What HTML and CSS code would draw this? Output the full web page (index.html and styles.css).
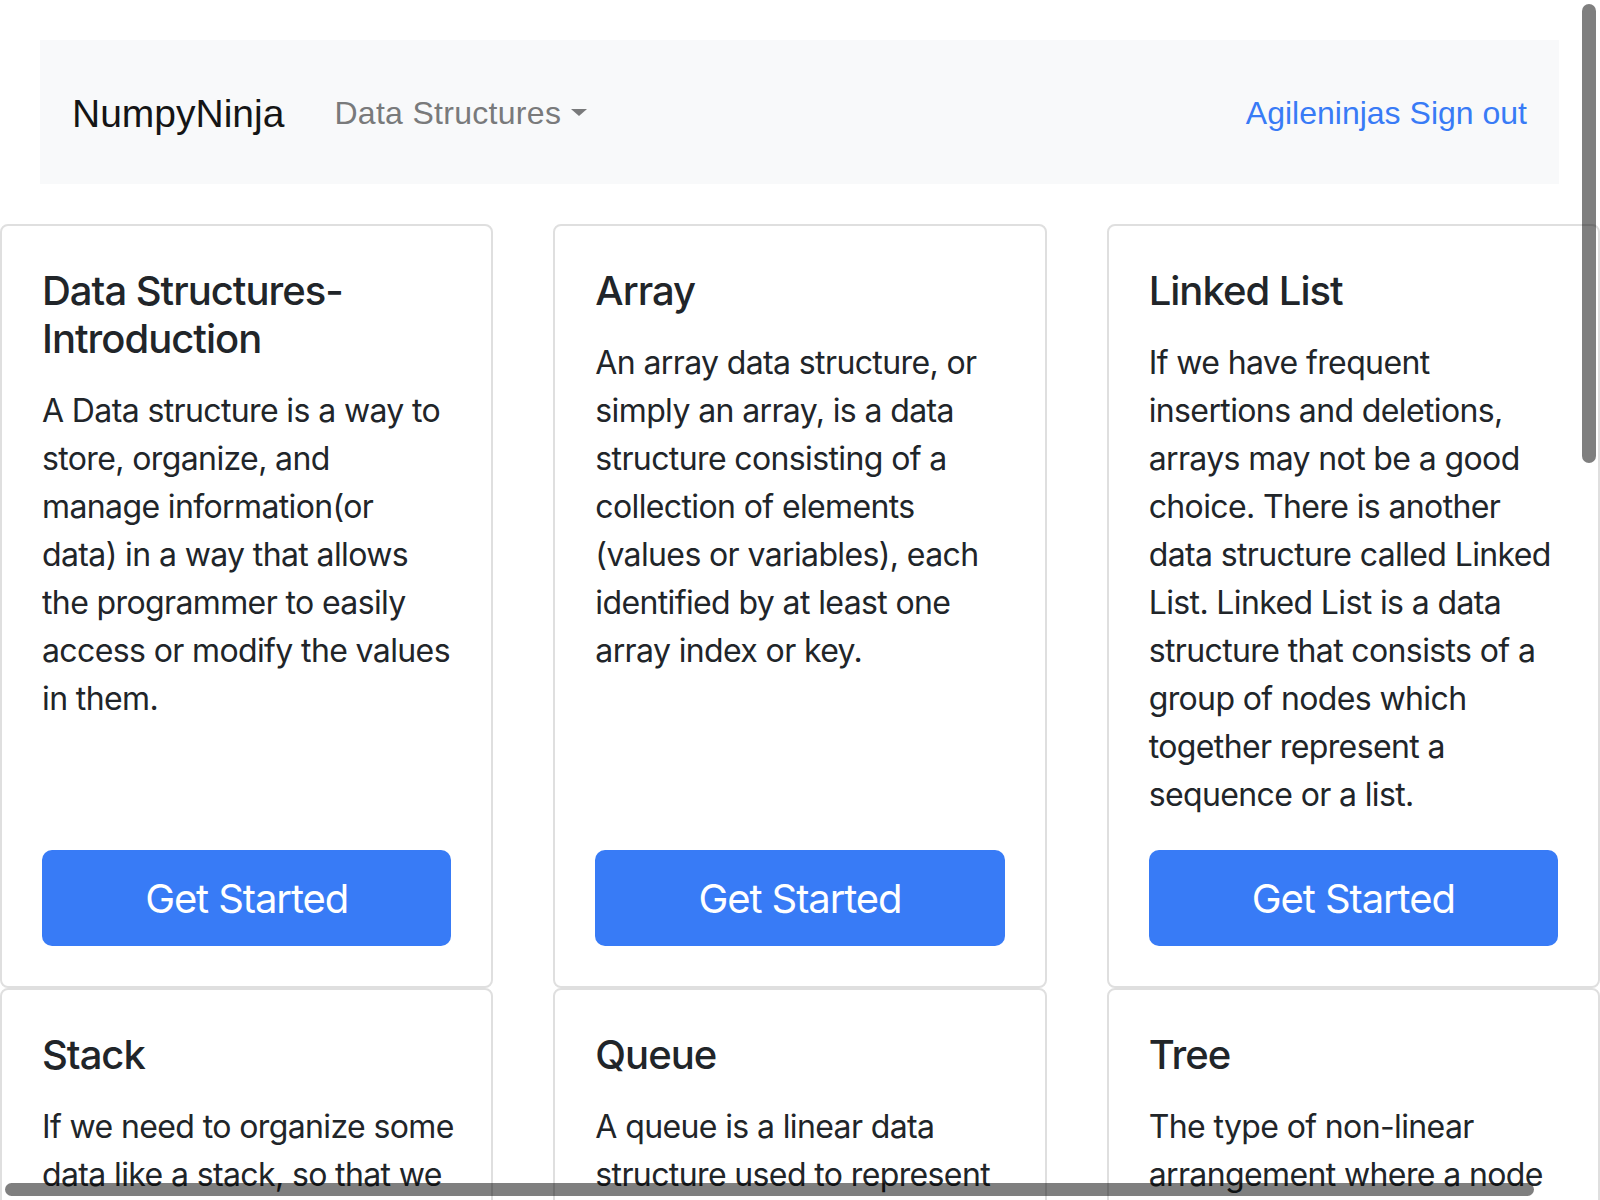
FILE: index.html
```html
<!DOCTYPE html>
<html lang="en">
<head>
<meta charset="utf-8">
<title>NumpyNinja</title>
<link rel="stylesheet" href="styles.css">
</head>
<body>
<div class="page">
  <nav class="navbar">
    <div class="nav-left">
      <a class="brand" href="#">NumpyNinja</a>
      <a class="nav-link dropdown-toggle" href="#">Data Structures<span class="caret"></span></a>
    </div>
    <div class="nav-right">
      <a class="user-link" href="#">Agileninjas</a>
      <a class="user-link" href="#">Sign out</a>
    </div>
  </nav>

  <div class="cards">
    <div class="card">
      <h5 class="card-title">Data Structures-<br>Introduction</h5>
      <p class="card-text">A Data structure is a way to<br>store, organize, and<br>manage information(or<br>data) in a way that allows<br>the programmer to easily<br>access or modify the values<br>in them.</p>
      <a class="btn" href="#">Get Started</a>
    </div>
    <div class="card">
      <h5 class="card-title">Array</h5>
      <p class="card-text">An array data structure, or<br>simply an array, is a data<br>structure consisting of a<br>collection of elements<br>(values or variables), each<br>identified by at least one<br>array index or key.</p>
      <a class="btn" href="#">Get Started</a>
    </div>
    <div class="card">
      <h5 class="card-title">Linked List</h5>
      <p class="card-text">If we have frequent<br>insertions and deletions,<br>arrays may not be a good<br>choice. There is another<br>data structure called Linked<br>List. Linked List is a data<br>structure that consists of a<br>group of nodes which<br>together represent a<br>sequence or a list.</p>
      <a class="btn" href="#">Get Started</a>
    </div>
    <div class="card">
      <h5 class="card-title">Stack</h5>
      <p class="card-text">If we need to organize some<br>data like a stack, so that we<br>can only access the most<br>recently added element.</p>
      <a class="btn" href="#">Get Started</a>
    </div>
    <div class="card">
      <h5 class="card-title">Queue</h5>
      <p class="card-text">A queue is a linear data<br>structure used to represent<br>a linear list of elements.</p>
      <a class="btn" href="#">Get Started</a>
    </div>
    <div class="card">
      <h5 class="card-title">Tree</h5>
      <p class="card-text">The type of non-linear<br>arrangement where a node<br>is connected to others.</p>
      <a class="btn" href="#">Get Started</a>
    </div>
  </div>
</div>
<div class="scrollbar-v"></div>
<div class="scrollbar-h"></div>
</body>
</html>
```

FILE: styles.css
```css
html, body {
  margin: 0;
  padding: 0;
  width: 1600px;
  height: 1200px;
  overflow: hidden;
  background: #ffffff;
}

body {
  font-family: Inter, "Liberation Sans", Arial, sans-serif;
  color: #212529;
}

a {
  text-decoration: none;
}

.page {
  padding-top: 40px;
}

.navbar {
  margin: 0 41px 0 40px;
  height: 144px;
  box-sizing: border-box;
  padding: 0 32px;
  background: #f8f9fa;
  display: flex;
  align-items: center;
  justify-content: space-between;
  font-family: "Liberation Sans", Arial, sans-serif;
}

.nav-left {
  display: flex;
  align-items: center;
}

.brand {
  font-size: 39px;
  line-height: 60px;
  color: #151515;
  margin-right: 34px;
  padding-top: 3px;
}

.nav-link {
  font-size: 32px;
  line-height: 48px;
  letter-spacing: 0.3px;
  color: #797a7b;
  padding: 2px 16px 0;
  display: flex;
  align-items: center;
}

.caret {
  display: inline-block;
  margin-left: 10px;
  margin-top: -2px;
  width: 0;
  height: 0;
  border-top: 7px solid #797a7b;
  border-left: 8px solid transparent;
  border-right: 8px solid transparent;
}

.nav-right {
  display: flex;
  gap: 9px;
  padding-top: 2px;
}

.user-link {
  font-size: 32px;
  line-height: 48px;
  color: #387bf6;
}

.cards {
  margin-top: 40px;
  display: grid;
  grid-template-columns: repeat(3, 493.33px);
  column-gap: 60px;
}

.card {
  border: 2px solid #dfdfdf;
  border-radius: 8px;
  padding: 41px 40px 40px;
  display: flex;
  flex-direction: column;
  background: #fff;
}

.card-title {
  margin: 0 0 24px;
  font-size: 40px;
  line-height: 48px;
  font-weight: 500;
  letter-spacing: -1px;
  color: #212529;
}

.card-text {
  margin: 0 0 31px;
  font-size: 32px;
  line-height: 48px;
  white-space: nowrap;
  letter-spacing: -0.62px;
}

.btn {
  margin-top: auto;
  display: flex;
  align-items: center;
  justify-content: center;
  height: 96px;
  border-radius: 10px;
  background: #387bf6;
  color: #ffffff;
  font-size: 40px;
  letter-spacing: -1.1px;
}

.scrollbar-v {
  position: fixed;
  left: 1582px;
  top: 4px;
  width: 14px;
  height: 459px;
  border-radius: 7px;
  background: rgba(0, 0, 0, 0.5);
}

.scrollbar-h {
  position: fixed;
  left: 5px;
  top: 1183px;
  width: 1529px;
  height: 13px;
  border-radius: 7px;
  background: rgba(0, 0, 0, 0.5);
}
```
